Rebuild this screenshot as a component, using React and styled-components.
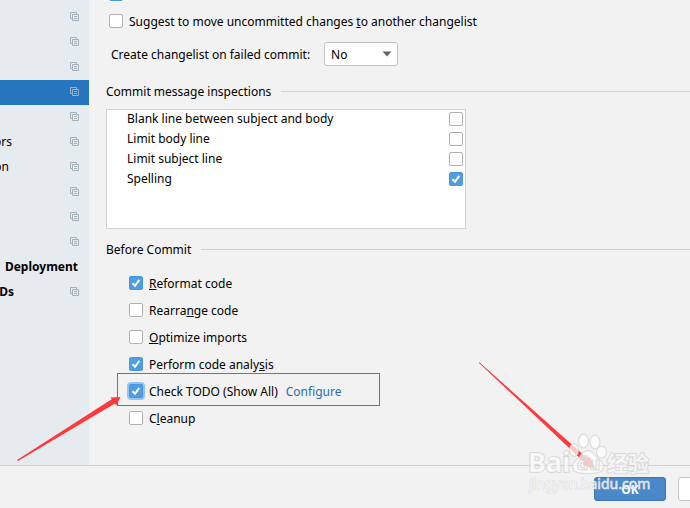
import styled, { createGlobalStyle } from "styled-components";

const App = () => (
  <>
    <GlobalStyle />
    <Dialog>
      <Body>
        <Sidebar>
          {sections.map((section, i) => (
            <SidebarRow key={i} $selected={section.selected}>
              <SidebarLabel $width={section.width} $bold={section.bold}>
                {section.name}
              </SidebarLabel>
              {!section.bare && <ProjectIcon />}
            </SidebarRow>
          ))}
        </Sidebar>
        <Content>
          <Options>
            <CheckRow>
              <Checkbox defaultChecked aria-label="Create changelists automatically" />
            </CheckRow>
            <CheckRow>
              <Checkbox id="suggest" />
              <label htmlFor="suggest">
                Suggest to move uncommitted changes <u>t</u>o another changelist
              </label>
            </CheckRow>
          </Options>
          <SelectRow>
            <label htmlFor="failed">Create changelist on failed commit:</label>
            <SelectBox>
              <Select id="failed" defaultValue="No">
                <option>No</option>
                <option>Yes</option>
                <option>Ask</option>
              </Select>
              <Arrow viewBox="0 0 10 6">
                <path d="M0.5 0.5h9L5 5.5z" fill="#666" />
              </Arrow>
            </SelectBox>
          </SelectRow>
          <Heading>Commit message inspections</Heading>
          <Inspections>
            {inspections.map(({ name, checked }) => (
              <Inspection key={name}>
                <label htmlFor={name}>{name}</label>
                <Checkbox id={name} defaultChecked={checked} />
              </Inspection>
            ))}
          </Inspections>
          <Heading>Before Commit</Heading>
          <BeforeCommit>
            <CheckRow>
              <Checkbox id="reformat" defaultChecked />
              <label htmlFor="reformat">
                <u>R</u>eformat code
              </label>
            </CheckRow>
            <CheckRow>
              <Checkbox id="rearrange" />
              <label htmlFor="rearrange">
                Rearra<u>n</u>ge code
              </label>
            </CheckRow>
            <CheckRow>
              <Checkbox id="optimize" />
              <label htmlFor="optimize">
                <u>O</u>ptimize imports
              </label>
            </CheckRow>
            <CheckRow>
              <Checkbox id="analysis" defaultChecked />
              <label htmlFor="analysis">
                Perform code analy<u>s</u>is
              </label>
            </CheckRow>
            <CheckRow>
              <Checkbox id="todo" defaultChecked $focused />
              <label htmlFor="todo">Check TODO (Show All)</label>
              <Link href="#configure">Configure</Link>
              <Highlight />
            </CheckRow>
            <CheckRow>
              <Checkbox id="cleanup" />
              <label htmlFor="cleanup">
                C<u>l</u>eanup
              </label>
            </CheckRow>
          </BeforeCommit>
        </Content>
      </Body>
      <Footer>
        <Button $primary>OK</Button>
        <Button aria-label="Cancel" />
      </Footer>
      <Annotations />
    </Dialog>
  </>
);

export default App;

const sections = [
  {},
  {},
  {},
  { selected: true },
  {},
  { name: "ors", width: 12 },
  { name: "on", width: 9 },
  {},
  {},
  {},
  { name: "Deployment", width: 78, bold: true, bare: true },
  { name: "Ds", width: 14, bold: true },
];

const inspections = [
  { name: "Blank line between subject and body" },
  { name: "Limit body line" },
  { name: "Limit subject line" },
  { name: "Spelling", checked: true },
];

const ProjectIcon = () => (
  <Icon viewBox="0 0 9 9" fill="none" stroke="#a5b1b9">
    <path d="M2 6.5H0.5V0.5H6.5V2" />
    <path d="M2.5 2.5h6v6h-6zM4 4.5h3M4 6.5h3" />
  </Icon>
);

const Annotations = () => (
  <Overlay viewBox="0 0 690 508">
    <g fill="#fc3c3c">
      <path d="M17 460L112 399L110 397.5L120.5 397L116.5 405.5L115 403.5L18 461Z" />
      <path d="M479 362L587 458L590 457L595 469L583 465L584 462L479 363Z" />
    </g>
    <g
      fill="#fff"
      fillOpacity="0.7"
      stroke="#d4d4d4"
      strokeWidth="2"
      strokeLinejoin="round"
      strokeOpacity="0.8"
      paintOrder="stroke"
    >
      <text x="528" y="472" fontSize="27" fontWeight="700">
        Bai
      </text>
      <text x="607" y="471" fontSize="21" fontWeight="700">
        经验
      </text>
      <text x="529" y="489" fontSize="14" strokeWidth="1">
        jingyan.baidu.com
      </text>
      <ellipse cx="574" cy="450" rx="4" ry="6" />
      <ellipse cx="583.5" cy="441" rx="4.5" ry="6.5" />
      <ellipse cx="595" cy="442" rx="4.5" ry="6.5" />
      <ellipse cx="601.5" cy="452" rx="4.5" ry="5.5" />
      <path d="M588 451c5 0 6 4 10 8c5 4 7 8 3 12c-4 3-22 3-26 0c-4-4-2-8 3-12c4-4 5-8 10-8z" />
    </g>
    <text
      x="577"
      y="470"
      fontSize="18"
      fontWeight="700"
      fill="none"
      stroke="#d8d8d8"
      strokeWidth="1"
    >
      du
    </text>
  </Overlay>
);

const GlobalStyle = createGlobalStyle`
  * {
    box-sizing: border-box;
  }
  body {
    margin: 0;
    overflow: hidden;
    background: #f2f2f2;
    color: #000;
    font-family: "Noto Sans", "Noto Sans CJK SC", sans-serif;
    font-size: 12px;
  }
`;

const Dialog = styled.div`
  position: relative;
  display: flex;
  flex-direction: column;
  min-height: 100vh;
  overflow: hidden;
`;

const Body = styled.div`
  display: flex;
`;

const Sidebar = styled.nav`
  width: 89px;
  flex-shrink: 0;
  padding-top: 5px;
  background: #e6ebf0;
`;

const SidebarRow = styled.div`
  display: flex;
  align-items: center;
  justify-content: space-between;
  height: 25px;
  padding: 0 10px 2px 0;
  background: ${(props) => (props.$selected ? "#2675bf" : "transparent")};
`;

const SidebarLabel = styled.span`
  display: flex;
  justify-content: flex-end;
  width: ${(props) => props.$width || 0}px;
  font-weight: ${(props) => (props.$bold ? 700 : 400)};
`;

const Icon = styled.svg`
  width: 9px;
  height: 9px;
`;

const Content = styled.main`
  flex: 1;
  min-width: 0;
  padding: 0 0 34px 17px;
`;

const Options = styled.div`
  margin-top: -20px;
  padding-left: 3px;
`;

const CheckRow = styled.div`
  position: relative;
  display: flex;
  padding: 7px 0 6px;
  line-height: 16px;

  label,
  a {
    height: 14px;
  }
  label {
    margin-left: 6px;
  }
`;

const Checkbox = styled.input.attrs({ type: "checkbox" })`
  appearance: none;
  width: 14px;
  height: 14px;
  margin: 0;
  flex-shrink: 0;
  border: 1px solid #b0b0b0;
  border-radius: 2px;
  background: #fff;
  box-shadow: ${(props) => (props.$focused ? "0 0 0 2px #97c3f3" : "none")};

  &:checked {
    border-color: #4b97de;
    background: #4f9ee3
      url("data:image/svg+xml,%3Csvg xmlns='http://www.w3.org/2000/svg' viewBox='0 0 12 12'%3E%3Cpath d='M2.5 6.2L5 8.8L9.3 2.8' fill='none' stroke='white' stroke-width='2'/%3E%3C/svg%3E");
  }
`;

const SelectRow = styled.div`
  display: flex;
  align-items: center;
  gap: 14px;
  margin: 8px 0 17px;
  padding-left: 5px;
`;

const SelectBox = styled.div`
  position: relative;
`;

const Select = styled.select`
  appearance: none;
  display: block;
  width: 74px;
  height: 24px;
  padding: 0 6px;
  border: 1px solid #c4c4c4;
  border-radius: 3px;
  background: #fff;
  color: #000;
  font: inherit;
`;

const Arrow = styled.svg`
  position: absolute;
  top: 9px;
  right: 6px;
  width: 10px;
  height: 6px;
  pointer-events: none;
`;

const Heading = styled.h2`
  display: flex;
  align-items: center;
  gap: 10px;
  height: 17px;
  margin: 12px 0 9px;
  font-size: 12px;
  font-weight: 400;

  &::after {
    content: "";
    flex: 1;
    height: 1px;
    background: #d1d1d1;
  }
`;

const Inspections = styled.div`
  max-width: 360px;
  height: 120px;
  border: 1px solid #d1d1d1;
  background: #fff;
`;

const Inspection = styled.div`
  display: flex;
  justify-content: space-between;
  padding: 2px 2px 4px 20px;

  label {
    height: 14px;
    line-height: 14px;
  }
`;

const BeforeCommit = styled.div`
  padding: 2px 0 0 23px;
`;

const Link = styled.a`
  margin-left: 8px;
  color: #2470b3;
  text-decoration: none;
`;

const Highlight = styled.div`
  position: absolute;
  top: -4px;
  left: -12px;
  width: 263px;
  height: 33px;
  border: 1px solid #fa3c3c;
  pointer-events: none;
`;

const Footer = styled.footer`
  display: flex;
  justify-content: flex-end;
  gap: 12px;
  flex: 1;
  margin-right: -60px;
  padding-top: 11px;
  border-top: 1px solid #d1d1d1;
`;

const Button = styled.button`
  width: 72px;
  height: 24px;
  flex-shrink: 0;
  border: 1px solid ${(props) => (props.$primary ? "#3d75b2" : "#c4c4c4")};
  border-radius: 3px;
  background: ${(props) => (props.$primary ? "#4a88c9" : "#fff")};
  color: ${(props) => (props.$primary ? "#fff" : "#000")};
  font: inherit;
  font-weight: 700;
`;

const Overlay = styled.svg`
  position: absolute;
  top: 0;
  left: 0;
  width: 690px;
  height: 508px;
  pointer-events: none;
`;
